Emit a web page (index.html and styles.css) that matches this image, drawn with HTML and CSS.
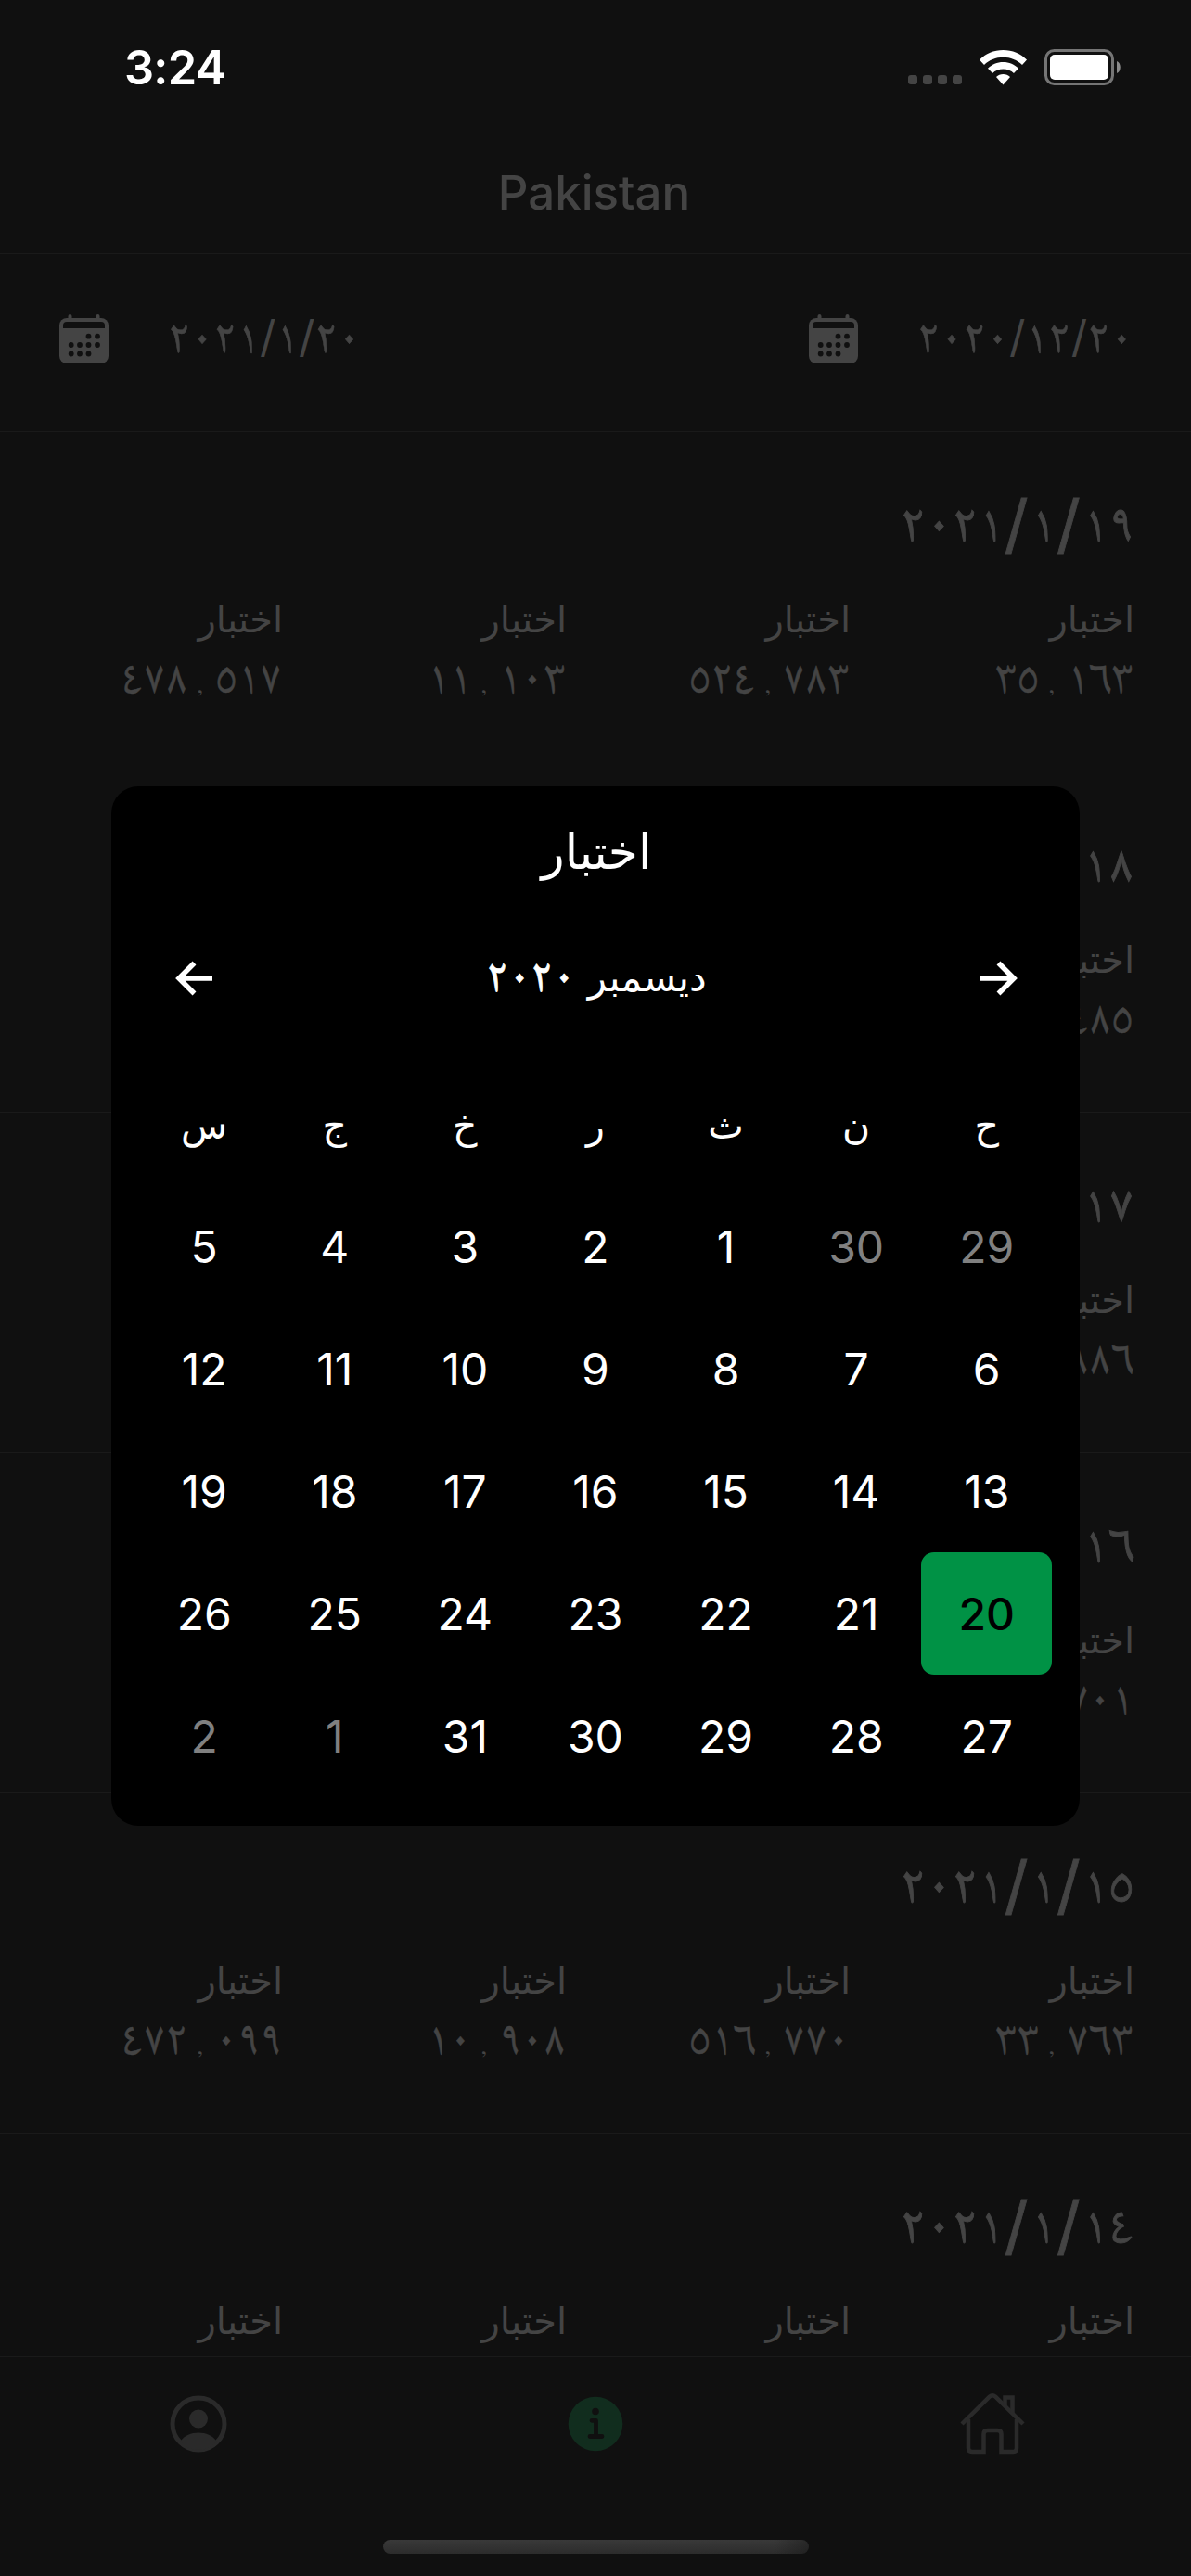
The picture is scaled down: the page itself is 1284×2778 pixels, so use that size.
FILE: index.html
```html
<!DOCTYPE html>
<html lang="ar">
<head>
<meta charset="utf-8">
<title>Pakistan</title>
<link rel="stylesheet" href="styles.css">
</head>
<body>
<div class="screen">
  <header class="status">
    <span class="clock">3:24</span>
    <div class="signals">
      <svg class="cell" width="58" height="10" viewBox="0 0 58 10" fill="#444"><rect width="10" height="10" rx="3"/><rect x="16" width="10" height="10" rx="3"/><rect x="32" width="10" height="10" rx="3"/><rect x="48" width="10" height="10" rx="3"/></svg>
      <svg class="wifi" width="51" height="38" viewBox="0 0 51 38" fill="#fff"><path d="M25.500 0C35.500 0 44.500 4 51 10.500L46 16C40.500 10.800 33.500 7.800 25.500 7.800S10.500 10.800 5 16L0 10.500C6.500 4 15.500 0 25.500 0Z"/><path d="M25.500 13C32 13 37.700 15.500 42 19.700L37 25C34 22.200 30 20.500 25.500 20.500S17 22.200 14 25L9 19.700C13.300 15.500 19 13 25.500 13Z"/><path d="M25.500 26C28.500 26 31 27.100 33 29L25.500 37.500L18 29C20 27.100 22.500 26 25.500 26Z"/></svg>
      <svg class="battery" width="83" height="39" viewBox="0 0 83 39"><rect x="1.500" y="1.500" width="72" height="36" rx="9" fill="none" stroke="#757575" stroke-width="3"/><rect x="6" y="6" width="63" height="27" rx="5" fill="#fff"/><path d="M78 13C83 14.500 83 24.500 78 26Z" fill="#8a8a8a"/></svg>
    </div>
  </header>
  <h1 class="title">Pakistan</h1>

  <section class="range">
    <div class="pick">
      <svg class="cal" width="54" height="54" viewBox="0 0 54 54"><path d="M11.500 2V7M41.500 2V7" stroke="#444" stroke-width="4" stroke-linecap="round"/><rect y="4" width="53" height="49" rx="8" fill="#444"/><path d="M4 15V12Q4 8 8 8H45Q49 8 49 12V15Z" fill="#101010"/><g fill="#101010"><circle cx="31.500" cy="23.700" r="2.900"/><circle cx="41" cy="23.700" r="2.900"/><circle cx="12.700" cy="33" r="2.900"/><circle cx="22" cy="33" r="2.900"/><circle cx="31.500" cy="33" r="2.900"/><circle cx="41" cy="33" r="2.900"/><circle cx="12.700" cy="42.500" r="2.900"/><circle cx="22" cy="42.500" r="2.900"/><circle cx="31.500" cy="42.500" r="2.900"/></g></svg>
      <span class="day" dir="ltr">٢٠٢١<i>/</i>١<i>/</i>٢٠</span>
    </div>
    <div class="pick">
      <svg class="cal" width="54" height="54" viewBox="0 0 54 54"><path d="M11.500 2V7M41.500 2V7" stroke="#444" stroke-width="4" stroke-linecap="round"/><rect y="4" width="53" height="49" rx="8" fill="#444"/><path d="M4 15V12Q4 8 8 8H45Q49 8 49 12V15Z" fill="#101010"/><g fill="#101010"><circle cx="31.500" cy="23.700" r="2.900"/><circle cx="41" cy="23.700" r="2.900"/><circle cx="12.700" cy="33" r="2.900"/><circle cx="22" cy="33" r="2.900"/><circle cx="31.500" cy="33" r="2.900"/><circle cx="41" cy="33" r="2.900"/><circle cx="12.700" cy="42.500" r="2.900"/><circle cx="22" cy="42.500" r="2.900"/><circle cx="31.500" cy="42.500" r="2.900"/></g></svg>
      <span class="day" dir="ltr">٢٠٢٠<i>/</i>١٢<i>/</i>٢٠</span>
    </div>
  </section>

  <main class="list" dir="rtl">
    <article class="entry">
      <h2 dir="ltr">٢٠٢١<i>/</i>١<i>/</i>١٩</h2>
      <dl><div><dt>اختبار</dt><dd dir="ltr">٣٥<i>,</i>١٦٣</dd></div><div><dt>اختبار</dt><dd dir="ltr">٥٢٤<i>,</i>٧٨٣</dd></div><div><dt>اختبار</dt><dd dir="ltr">١١<i>,</i>١٠٣</dd></div><div><dt>اختبار</dt><dd dir="ltr">٤٧٨<i>,</i>٥١٧</dd></div></dl>
    </article>
    <article class="entry">
      <h2 dir="ltr">٢٠٢١<i>/</i>١<i>/</i>١٨</h2>
      <dl><div><dt>اختبار</dt><dd dir="ltr">٣٤<i>,</i>٤٨٥</dd></div></dl>
    </article>
    <article class="entry">
      <h2 dir="ltr">٢٠٢١<i>/</i>١<i>/</i>١٧</h2>
      <dl><div><dt>اختبار</dt><dd dir="ltr">٣٤<i>,</i>٨٨٦</dd></div></dl>
    </article>
    <article class="entry">
      <h2 dir="ltr">٢٠٢١<i>/</i>١<i>/</i>١٦</h2>
      <dl><div><dt>اختبار</dt><dd dir="ltr">٣٤<i>,</i>٧٠١</dd></div></dl>
    </article>
    <article class="entry">
      <h2 dir="ltr">٢٠٢١<i>/</i>١<i>/</i>١٥</h2>
      <dl><div><dt>اختبار</dt><dd dir="ltr">٣٣<i>,</i>٧٦٣</dd></div><div><dt>اختبار</dt><dd dir="ltr">٥١٦<i>,</i>٧٧٠</dd></div><div><dt>اختبار</dt><dd dir="ltr">١٠<i>,</i>٩٠٨</dd></div><div><dt>اختبار</dt><dd dir="ltr">٤٧٢<i>,</i>٠٩٩</dd></div></dl>
    </article>
    <article class="entry">
      <h2 dir="ltr">٢٠٢١<i>/</i>١<i>/</i>١٤</h2>
      <dl><div><dt>اختبار</dt></div><div><dt>اختبار</dt></div><div><dt>اختبار</dt></div><div><dt>اختبار</dt></div></dl>
    </article>
  </main>

  <nav class="tabs">
    <svg width="70" height="70" viewBox="0 0 70 70"><circle cx="35" cy="35" r="28" fill="none" stroke="#2a2a2a" stroke-width="5"/><circle cx="35" cy="29.500" r="10" fill="#2a2a2a"/><path d="M15.500 53.500C20 47.500 27 44.500 35 44.500S50 47.500 54.500 53.500C49.500 59.500 43 63 35 63S20.500 59.500 15.500 53.500Z" fill="#2a2a2a"/></svg>
    <svg width="70" height="70" viewBox="0 0 70 70"><circle cx="35" cy="35" r="29.300" fill="#112d1e"/><circle cx="35" cy="21.500" r="3.800" fill="#101010"/><path d="M31 31.300H35.500V48.500M29 48.500H42" fill="none" stroke="#101010" stroke-width="4.800" stroke-linecap="round" stroke-linejoin="round"/></svg>
    <svg width="70" height="70" viewBox="0 0 70 70" fill="none" stroke="#2a2a2a" stroke-width="4.500"><path d="M2 35L32 5.500Q35 3 38 5.500L68 35"/><path d="M9 30V61Q9 65 13 65H25.500V46Q25.500 42 29.500 42H40.500Q44.500 42 44.500 46V65H57.500Q61 65 61 61V30"/><path d="M48.500 15V6.500H56.500V23" /></svg>
  </nav>
  <footer class="home"><span></span></footer>
</div>

<section class="modal" dir="rtl">
  <h3>اختبار</h3>
  <div class="month">
    <svg width="40" height="38" viewBox="0 0 40 38" fill="none" stroke="#fff" stroke-width="5.500"><path d="M0 19H36M19.500 2.500L36 19L19.500 35.500"/></svg>
    <p>ديسمبر <b>٢٠٢٠</b></p>
    <svg width="40" height="38" viewBox="0 0 40 38" fill="none" stroke="#fff" stroke-width="5.500"><path d="M40 19H4M20.500 2.500L4 19L20.500 35.500"/></svg>
  </div>
  <div class="grid week"><span>ح</span><span>ن</span><span>ث</span><span>ر</span><span>خ</span><span>ج</span><span>س</span></div>
  <div class="grid days">
    <span class="out">29</span><span class="out">30</span><span>1</span><span>2</span><span>3</span><span>4</span><span>5</span>
    <span>6</span><span>7</span><span>8</span><span>9</span><span>10</span><span>11</span><span>12</span>
    <span>13</span><span>14</span><span>15</span><span>16</span><span>17</span><span>18</span><span>19</span>
    <span class="on">20</span><span>21</span><span>22</span><span>23</span><span>24</span><span>25</span><span>26</span>
    <span>27</span><span>28</span><span>29</span><span>30</span><span>31</span><span class="out">1</span><span class="out">2</span>
  </div>
</section>
</body>
</html>
```
FILE: styles.css
```css
* { box-sizing: border-box; margin: 0; padding: 0; }
body { width: 1284px; height: 2778px; background: #101010; color: #444; font-family: Inter, "DejaVu Sans", sans-serif; overflow: hidden; position: relative; }
svg { display: block; flex: none; }
i { font-style: normal; }

.screen { display: flex; flex-direction: column; height: 2778px; }

.status { height: 141px; display: flex; justify-content: space-between; padding: 0 75px 0 134px; color: #fff; }
.clock { font-size: 50.5px; font-weight: 600; line-height: 60px; padding-top: 43px; letter-spacing: -0.8px; }
.signals { display: flex; align-items: flex-start; }
.cell { margin: 81px 19px 0 0; }
.wifi { margin: 54px 19px 0 0; }
.battery { margin-top: 53px; }

.title { height: 133px; padding: 37px 3px 0 0; line-height: 60px; font-size: 51px; font-weight: 500; text-align: center; border-bottom: 1px solid #1a1a1a; }

.range { height: 192px; padding: 0 64px 0 64px; display: flex; justify-content: space-between; border-bottom: 1px solid #1a1a1a; }
.pick { display: flex; width: 348px; padding-top: 65px; }
.cal { margin-right: 63px; }
.day { font: 48px/54px FreeSerif, "DejaVu Sans", serif; white-space: nowrap; transform: scaleX(1.03); transform-origin: left; -webkit-text-stroke: 0.5px; }
.day i { font: 400 47px/0 Inter, sans-serif; letter-spacing: 1px; -webkit-text-stroke: 0; }

.list { flex: 1; min-height: 0; overflow: hidden; }
.entry { height: 367px; padding: 72px 62px 0 0; border-bottom: 1px solid #1a1a1a; }
.entry h2 { height: 60px; font: 53px/60px FreeSerif, "DejaVu Sans", serif; text-align: right; margin-right: -1px; transform: scaleX(1.055); transform-origin: right; -webkit-text-stroke: 0.8px; }
.entry h2 i { font: 400 69px/0 Inter, sans-serif; vertical-align: -7px; letter-spacing: 4px; padding-right: 2px; }
.entry dl { display: grid; grid-template-columns: repeat(4, 306px); margin-top: 40px; }
.entry dt { height: 60px; font: 40px/60px "DejaVu Sans", sans-serif; margin-right: -1px; }
.entry dd { height: 60px; font: 48px/60px FreeSerif, "DejaVu Sans", serif; text-align: right; padding-top: 5px; unicode-bidi: bidi-override; -webkit-text-stroke: 0.5px; }
.entry dd i { padding: 0 13px 0 10px; font-size: 26px; line-height: 0; -webkit-text-stroke: 0; }

.tabs { height: 160px; border-top: 1px solid #1a1a1a; display: grid; grid-template-columns: repeat(3, 1fr); justify-items: center; padding-top: 37px; }
.home { height: 77px; padding-top: 38px; }
.home span { display: block; width: 459px; height: 15px; margin: 0 auto; border-radius: 8px; background: linear-gradient(90deg, transparent 92%, #10101066), linear-gradient(#393939, #2c2c2c); }

.modal { position: absolute; left: 120px; top: 848px; width: 1044px; height: 1121px; background: #000; color: #fff; border-radius: 29px; padding: 0 30px 0 27px; }
.modal h3 { height: 140px; font: 52px/60px "DejaVu Sans", sans-serif; padding: 41px 0 0 5px; text-align: center; }
.month { height: 134px; display: flex; justify-content: space-between; align-items: center; padding: 0 37px 0 42px; }
.month p { font: 42px/60px "DejaVu Sans", sans-serif; }
.month b { font: 48px/0 FreeSerif, "DejaVu Sans", serif; -webkit-text-stroke: 0.8px; }
.grid { display: grid; grid-template-columns: repeat(7, 140.6px); }
.grid span { display: flex; align-items: center; justify-content: center; }
.week { height: 156px; font: 41px/60px "DejaVu Sans", sans-serif; padding-top: 27px; }
.days { grid-auto-rows: 132px; font-size: 48px; }
.days .out { color: #808080; }
.days .on { background: #009245; color: #000; font-weight: 500; border-radius: 14px; }
```
